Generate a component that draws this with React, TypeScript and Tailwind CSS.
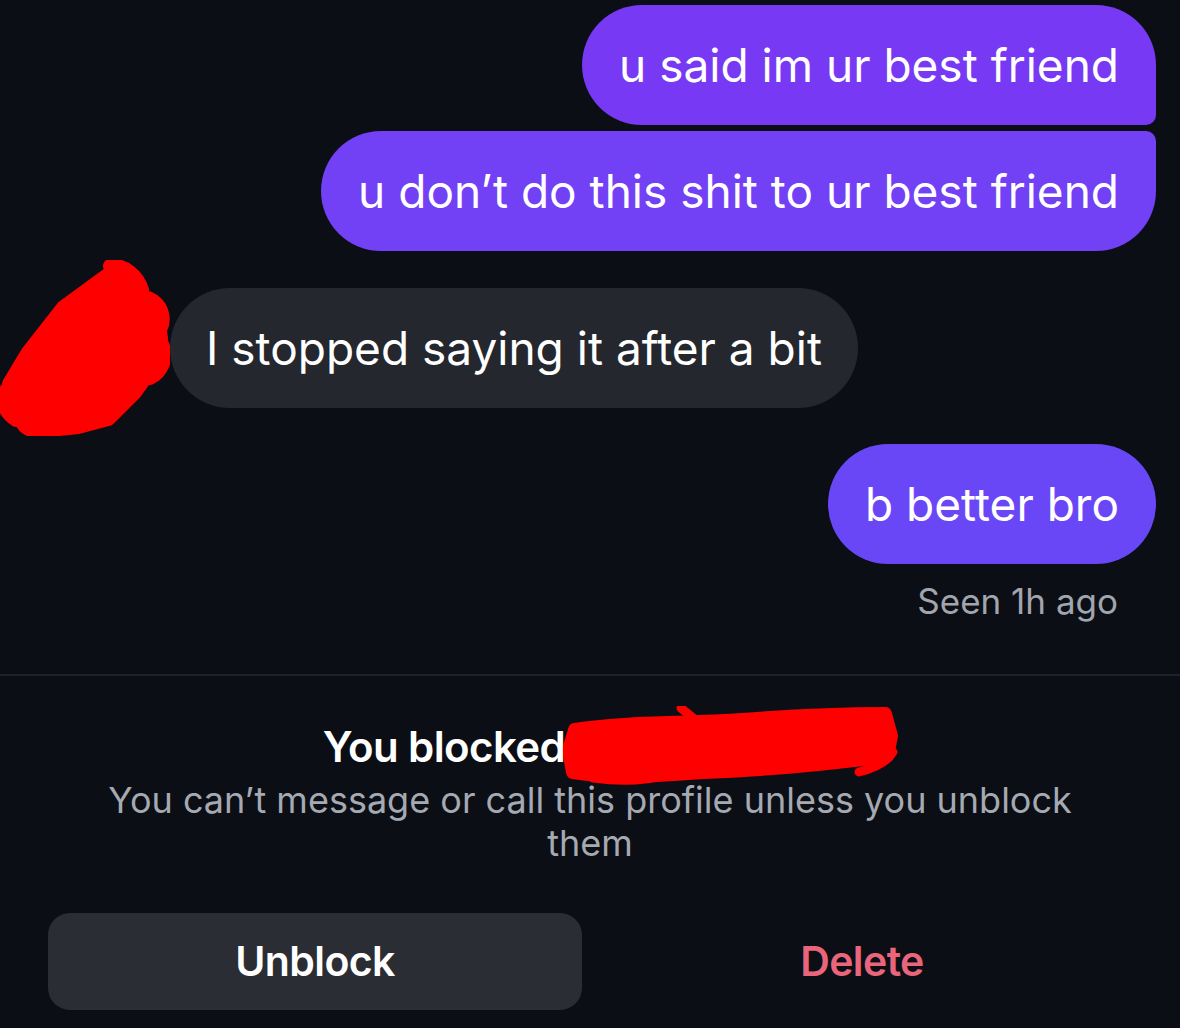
import React from 'react';

const FONT = { fontFamily: 'Inter, "Noto Sans", sans-serif' };

// red marker scribble over the sender's avatar
const AvatarScribble = () => (
  <svg width="172" height="176" viewBox="0 0 172 176" className="shrink-0 -my-[28px] -ml-[2px]">
    <path
      d="M118 10 L136 26 L146 40 L158 56 L162 78 L156 104 L136 132 L110 158 L80 166 L42 170 L16 148 L12 124 L30 94 L66 48 Z"
      fill="#ff0000"
      stroke="#ff0000"
      strokeWidth="16"
      strokeLinejoin="round"
    />
    <path
      d="M112 6 C126 4 140 16 144 30 M150 38 C164 44 168 58 162 70 M164 84 C170 98 164 112 152 118 M8 130 C2 140 6 152 18 160 M24 162 C30 174 48 174 62 168"
      fill="none"
      stroke="#ff0000"
      strokeWidth="14"
      strokeLinecap="round"
    />
  </svg>
);

// red marker scribble over the blocked user's name
const NameScribble = () => (
  <svg width="336" height="80" viewBox="0 0 336 80" className="absolute left-[-2px] top-[-40px]">
    <path
      d="M12 24 C60 16 120 18 180 14 C230 10 280 8 322 8 L328 30 L324 50 C262 58 200 64 140 66 C90 70 44 72 10 66 L6 44 Z"
      fill="#ff0000"
      stroke="#ff0000"
      strokeWidth="14"
      strokeLinejoin="round"
    />
    <path
      d="M118 2 L130 12 M4 48 C40 40 90 44 140 40 M296 66 C312 62 324 56 330 46 M30 72 C60 76 84 74 100 70"
      fill="none"
      stroke="#ff0000"
      strokeWidth="9"
      strokeLinecap="round"
    />
  </svg>
);

const Outgoing = ({ text, className }: { text: string; className: string }) => (
  <div className="flex justify-end pr-[24px]">
    <div className={`h-[120px] flex items-center px-[37px] text-[46px] text-white ${className}`}>
      {text}
    </div>
  </div>
);

export default function App() {
  return (
    <div className="w-[1180px] h-[1028px] bg-[#0b0e14] overflow-hidden flex flex-col" style={FONT}>
      <div className="pt-[5px] flex flex-col">
        <Outgoing
          text="u said im ur best friend"
          className="bg-[#7739f4] rounded-tl-[60px] rounded-bl-[60px] rounded-tr-[60px] rounded-br-[10px]"
        />
        <div className="h-[6px]" />
        <Outgoing
          text="u don’t do this shit to ur best friend"
          className="bg-[#7240f5] rounded-tl-[60px] rounded-bl-[60px] rounded-tr-[10px] rounded-br-[60px]"
        />

        <div className="mt-[37px] flex items-center">
          <AvatarScribble />
          <div className="h-[120px] flex items-center px-[36px] rounded-[60px] bg-[#24272d] text-[46px] text-white">
            I stopped saying it after a bit
          </div>
        </div>

        <div className="h-[36px]" />
        <Outgoing text="b better bro" className="bg-[#6a47f6] rounded-[60px]" />

        <div className="flex justify-end pr-[62px] mt-[16px]">
          <span className="text-[35px] leading-[42px] text-[#a1a5ae]">Seen 1h ago</span>
        </div>
      </div>

      <div className="mt-[52px] h-[2px] bg-[#1c212b]" />

      <div className="flex flex-col items-center mt-[47px]">
        <div className="text-[42px] leading-[48px] font-semibold text-white tracking-[-0.6px]">
          You blocked
          <span className="relative inline-block w-[292px] h-[10px] align-middle">
            <NameScribble />
          </span>
        </div>
        <p className="mt-[8px] w-[990px] text-center text-[36px] leading-[43px] text-[#a5a9b2]">
          You can’t message or call this profile unless you unblock them
        </p>
      </div>

      <div className="mt-[48px] px-[48px] flex gap-[10px]">
        <button className="w-[534px] h-[97px] rounded-[22px] bg-[#2a2d34] text-[41px] font-semibold text-white tracking-[-0.6px]">
          Unblock
        </button>
        <button className="w-[540px] h-[97px] text-[41px] font-semibold text-[#e8657b] tracking-[-0.6px]">
          Delete
        </button>
      </div>
    </div>
  );
}
